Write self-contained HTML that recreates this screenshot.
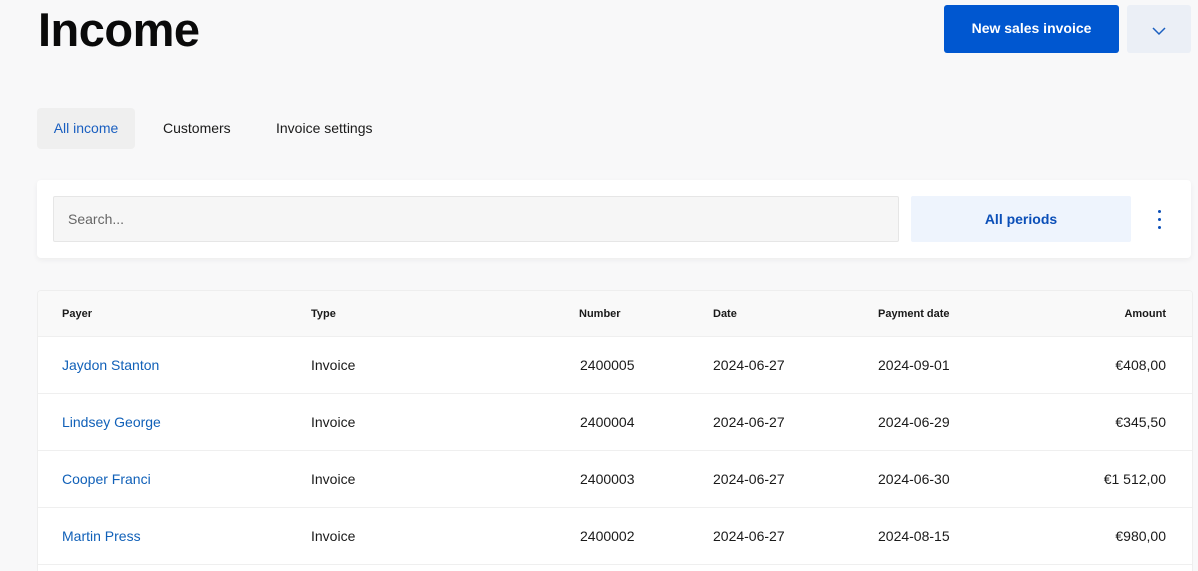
<!DOCTYPE html>
<html><head><style>
*{box-sizing:border-box;margin:0;padding:0}
html,body{width:1198px;height:571px;overflow:hidden}
body{background:#f8f8f9;font-family:"Liberation Sans",sans-serif;color:#1a1a1a;position:relative}
h1{position:absolute;left:38px;top:2px;font-size:47px;font-weight:bold;letter-spacing:-0.5px;color:#0a0a0a}
.btn{position:absolute;left:944px;top:5px;width:175px;height:48px;background:#0057d0;border-radius:3px;color:#fff;font-size:14px;font-weight:bold;text-align:center;line-height:46px}
.dd{position:absolute;left:1127px;top:5px;width:64px;height:48px;background:#ebeff6;border-radius:3px}
.tab{position:absolute;top:108px;height:41px;line-height:41px;font-size:14px;color:#1a1a1a}
.card{position:absolute;left:37px;top:180px;width:1154px;height:78px;background:#fff;border-radius:4px;box-shadow:0 2px 6px rgba(0,0,0,.05)}
.search{position:absolute;left:16px;top:16px;width:846px;height:46px;background:#f6f6f6;border:1px solid #e6e6e6;border-radius:2px;font-size:14px;color:#666;padding-left:14px;line-height:44px}
.per{position:absolute;left:874px;top:16px;width:220px;height:46px;background:#eef4fd;border-radius:2px;color:#0b4fb8;font-weight:bold;font-size:14px;text-align:center;line-height:46px}
.dots{position:absolute;left:1121px;top:30px;width:4px}
.dots i{display:block;width:3px;height:3px;border-radius:50%;background:#0b4fb8;margin-bottom:5px}
.table{position:absolute;left:37px;top:290px;width:1156px;height:281px;background:#fff;border:1px solid #eee;border-bottom:none;border-radius:4px 4px 0 0;overflow:hidden}
.hd{height:45px;background:#f9f9f9;position:relative;font-size:11px;font-weight:bold}
.row{height:57px;border-top:1px solid #efefef;position:relative;font-size:14px}
.c{position:absolute;top:0}
.hd .c{line-height:46px}.row .c{line-height:56px}
.a{color:#1060b8}
</style></head><body>
<h1>Income</h1>
<div class="btn">New sales invoice</div>
<div class="dd"><svg width="64" height="48"><path d="M26 23l6 6 6-6" fill="none" stroke="#1a5fc0" stroke-width="1.5"/></svg></div>
<div class="tab" style="left:37px;width:98px;background:#efefef;border-radius:4px;text-align:center;color:#1a5fc0">All income</div>
<div class="tab" style="left:163px">Customers</div>
<div class="tab" style="left:276px">Invoice settings</div>
<div class="card"><div class="search">Search...</div><div class="per">All periods</div><div class="dots"><i></i><i></i><i></i></div></div>
<div class="table">
<div class="hd"><span class="c" style="left:24px">Payer</span><span class="c" style="left:273px">Type</span><span class="c" style="left:541px">Number</span><span class="c" style="left:675px">Date</span><span class="c" style="left:840px">Payment date</span><span class="c" style="right:26px">Amount</span></div>
<div class="row"><span class="c a" style="left:24px">Jaydon Stanton</span><span class="c" style="left:273px">Invoice</span><span class="c" style="left:542px">2400005</span><span class="c" style="left:675px">2024-06-27</span><span class="c" style="left:840px">2024-09-01</span><span class="c" style="right:26px">€408,00</span></div>
<div class="row"><span class="c a" style="left:24px">Lindsey George</span><span class="c" style="left:273px">Invoice</span><span class="c" style="left:542px">2400004</span><span class="c" style="left:675px">2024-06-27</span><span class="c" style="left:840px">2024-06-29</span><span class="c" style="right:26px">€345,50</span></div>
<div class="row"><span class="c a" style="left:24px">Cooper Franci</span><span class="c" style="left:273px">Invoice</span><span class="c" style="left:542px">2400003</span><span class="c" style="left:675px">2024-06-27</span><span class="c" style="left:840px">2024-06-30</span><span class="c" style="right:26px">€1 512,00</span></div>
<div class="row"><span class="c a" style="left:24px">Martin Press</span><span class="c" style="left:273px">Invoice</span><span class="c" style="left:542px">2400002</span><span class="c" style="left:675px">2024-06-27</span><span class="c" style="left:840px">2024-08-15</span><span class="c" style="right:26px">€980,00</span></div>
<div class="row"></div>
</div>
</body></html>
